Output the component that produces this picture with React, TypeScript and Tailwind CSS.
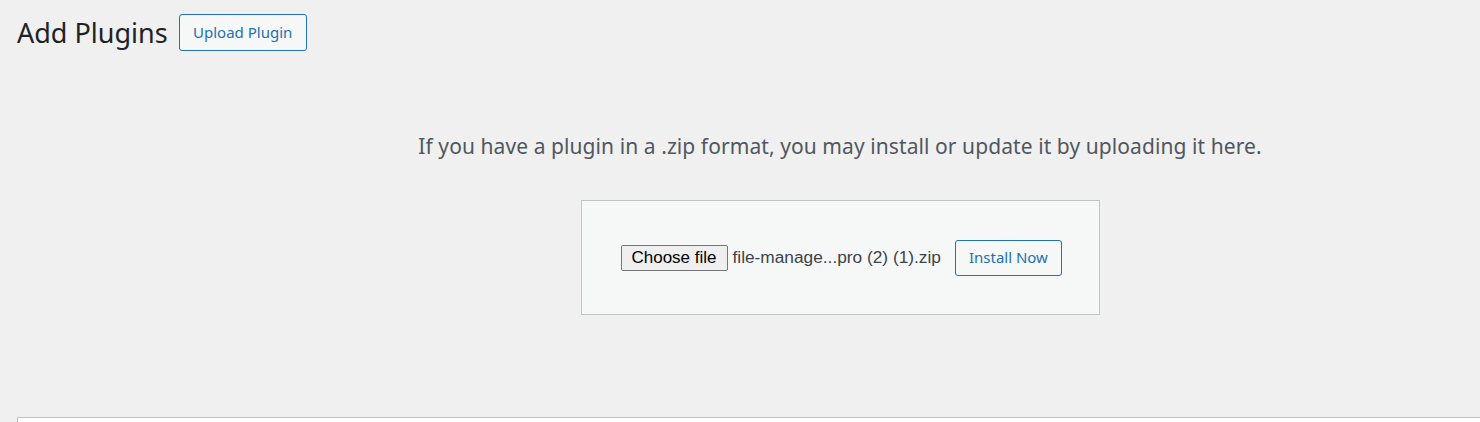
import React from 'react';

const sans = { fontFamily: '"Noto Sans", "Open Sans", sans-serif' };

const App: React.FC = () => {
  return (
    <div className="w-[1480px] h-[422px] overflow-hidden bg-[#f0f0f1] text-[#3c434a]" style={sans}>
      <div className="flex items-center h-[64px] pl-[17px] gap-[11px]">
        <h1 className="text-[27px] text-[#1d2327] leading-none">Add Plugins</h1>
        <button className="h-[37px] w-[128px] border border-[#2271b1] rounded-[3px] bg-[#f6f7f7] text-[#2271b1] text-[15px]">
          Upload Plugin
        </button>
      </div>

      <div className="pl-[200px] flex flex-col items-center">
        <p className="mt-[65px] text-[21px] leading-[34px] text-[#50575e] tracking-[0.08px]">
          If you have a plugin in a .zip format, you may install or update it by uploading it here.
        </p>
        <div className="mt-[37px] w-[519px] h-[115px] border border-[#c3c4c7] bg-[#f6f7f7] flex items-center pl-[39px]">
          <div className="flex items-center" style={{ fontFamily: '"Liberation Sans", Arial, sans-serif' }}>
            <span className="h-[26px] w-[107px] flex items-center justify-center border border-[#767676] rounded-[2px] bg-[#efefef] text-black text-[17px]">
              Choose file
            </span>
            <span className="ml-[5px] text-[17.3px] text-[#3c434a]">file-manage...pro (2) (1).zip</span>
          </div>
          <button className="ml-[14px] h-[36px] w-[107px] border border-[#2271b1] rounded-[3px] bg-[#f6f7f7] text-[#2271b1] text-[15px]">
            Install Now
          </button>
        </div>
      </div>

      <div className="mt-[102px] ml-[17px] h-[40px] border-t border-l border-[#c3c4c7] bg-white" />
    </div>
  );
};

export default App;
